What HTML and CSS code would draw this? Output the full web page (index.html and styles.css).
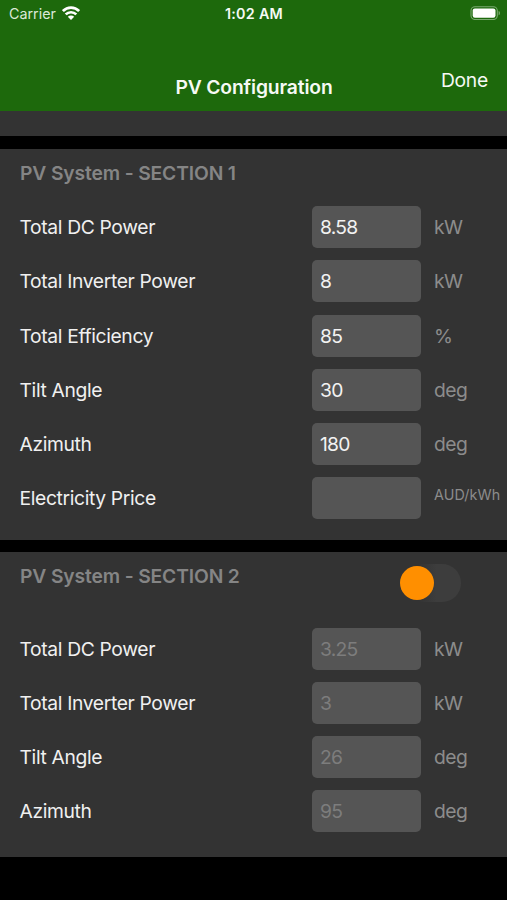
FILE: index.html
```html
<!DOCTYPE html>
<html lang="en">
<head>
<meta charset="utf-8">
<title>PV Configuration</title>
<link rel="stylesheet" href="styles.css">
</head>
<body>
<header class="top">
  <div class="status">
    <div class="carrier"><span>Carrier</span>
      <svg class="wifi" width="18" height="14" viewBox="0 0 18 14" fill="none" stroke="#fff" stroke-width="2.7"><path d="M.9 5.1C5.4.5 12.6.5 17.1 5.1"/><path d="M3.7 8.4C6.6 5.5 11.4 5.5 14.3 8.4"/><path d="M5.8 10.7C7.6 9 10.4 9 12.2 10.7L9 14Z" fill="#fff" stroke="none"/></svg>
    </div>
    <span class="time">1:02 AM</span>
    <svg class="battery" width="31" height="14" viewBox="0 0 31 14"><rect x="1" y=".7" width="26.3" height="12.8" rx="4" fill="none" stroke="#79a96f" stroke-width="1.1"/><rect x="2.7" y="2.4" width="22.8" height="9.3" rx="2.2" fill="#fff"/><path d="M28.6 5c1.8.5 1.8 3.7 0 4.2z" fill="#79a96f"/></svg>
  </div>
  <div class="nav">
    <h1>PV Configuration</h1>
    <span class="done">Done</span>
  </div>
</header>
<div class="strip"></div>
<section class="panel first">
  <div class="head"><h2>PV System - SECTION 1</h2></div>
  <div class="row"><span class="label">Total DC Power</span><span class="field">8.58</span><span class="unit">kW</span></div>
  <div class="row"><span class="label">Total Inverter Power</span><span class="field">8</span><span class="unit">kW</span></div>
  <div class="row"><span class="label">Total Efficiency</span><span class="field">85</span><span class="unit">%</span></div>
  <div class="row"><span class="label">Tilt Angle</span><span class="field">30</span><span class="unit">deg</span></div>
  <div class="row"><span class="label">Azimuth</span><span class="field">180</span><span class="unit">deg</span></div>
  <div class="row"><span class="label">Electricity Price</span><span class="field"></span><span class="unit small">AUD/kWh</span></div>
</section>
<section class="panel second">
  <div class="head"><h2>PV System - SECTION 2</h2><span class="switch"><span class="knob"></span></span></div>
  <div class="row"><span class="label">Total DC Power</span><span class="field off">3.25</span><span class="unit">kW</span></div>
  <div class="row"><span class="label">Total Inverter Power</span><span class="field off">3</span><span class="unit">kW</span></div>
  <div class="row"><span class="label">Tilt Angle</span><span class="field off">26</span><span class="unit">deg</span></div>
  <div class="row"><span class="label">Azimuth</span><span class="field off">95</span><span class="unit">deg</span></div>
</section>
</body>
</html>
```
FILE: styles.css
```css
* { box-sizing: border-box; }
body {
  margin: 0;
  height: 900px;
  overflow: hidden;
  background: #000;
  color: #f0f0f0;
  font-family: Inter, "Liberation Sans", sans-serif;
  font-size: 19.3px;
  line-height: 24px;
  white-space: nowrap;
}
.top { height: 111px; background: #1d690c; color: #f6faf5; }
.status {
  display: grid;
  grid-template-columns: 1fr auto 1fr;
  height: 28px;
  padding: 0 6px 0 9px;
  font-size: 14.3px;
  line-height: 28px;
}
.carrier { display: flex; gap: 6px; color: #dbe8d8; }
.wifi { margin-top: 6px; }
.time { margin-right: 2px; font-weight: 600; letter-spacing: .3px; }
.battery { justify-self: end; margin-top: 6px; }
.nav {
  display: grid;
  grid-template-columns: 1fr auto 1fr;
  padding: 47px 19px 0;
}
h1, h2 { margin: 0; font-size: 19.3px; font-weight: 600; }
h1 { grid-column: 2; margin-left: 1px; letter-spacing: -.15px; }
.done { justify-self: end; margin-top: -7px; letter-spacing: -.25px; }
.strip { height: 25px; background: #333; }
.panel { background: #333; padding-left: 20px; }
.first { margin-top: 13px; height: 391px; }
.second { margin-top: 12px; height: 305px; }
.head { display: flex; justify-content: space-between; height: 51.2px; padding-top: 12px; }
.second .head { height: 69.5px; }
h2 { color: #858585; letter-spacing: -.14px; }
.row {
  display: grid;
  grid-template-columns: 292px 109px auto;
  align-items: center;
  height: 54.17px;
}
.label { margin-left: -.5px; letter-spacing: -.36px; }
.field {
  height: 42px;
  padding: 0 8px;
  line-height: 42px;
  background: #555;
  border-radius: 5px;
  color: #f2f2f2;
  letter-spacing: -.75px;
}
.off { color: #7d7d7d; }
.unit { padding-left: 13px; color: #8c8c8c; letter-spacing: -.5px; }
.small { font-size: 14.3px; margin-top: -6px; letter-spacing: .1px; }
.switch { width: 61px; height: 38px; margin-right: 46px; border-radius: 19px; background: linear-gradient(90deg, #333 30%, #3d3d3d 60%); }
.knob { display: block; width: 34px; height: 34px; margin: 2px 0 0; border-radius: 50%; background: #ff8f00; }
```
